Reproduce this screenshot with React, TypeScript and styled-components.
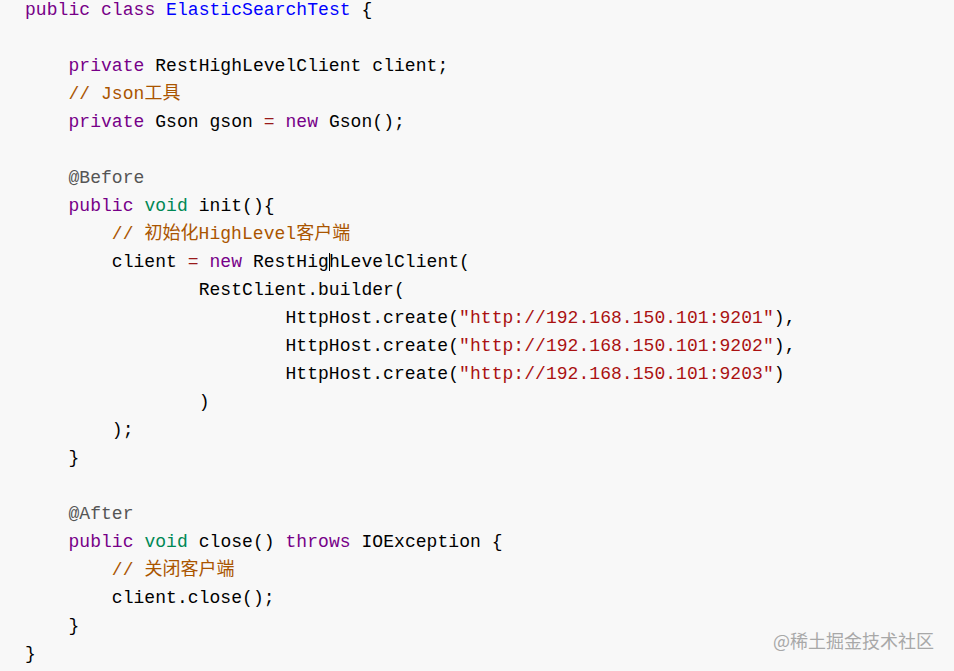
import React from "react";
import styled, { createGlobalStyle } from "styled-components";

const Global = createGlobalStyle`
  html, body { margin: 0; padding: 0; background: #f8f8f8; }
  #root { min-height: 100vh; }
`;

const Page = styled.div`
  position: relative;
  min-height: 671px;
  background: #f8f8f8;
  overflow: hidden;
`;

const Code = styled.pre`
  margin: -4px 0 0 0;
  padding: 0 0 0 25px;
  font-family: "Liberation Mono", "Noto Sans CJK SC", monospace;
  font-size: 18px;
  letter-spacing: 0.05px;
  color: #000;
`;

const Line = styled.div`
  height: 28px;
  line-height: 28px;
  white-space: pre;
`;

type Kind = "kw" | "def" | "type" | "str" | "op" | "cm" | "meta";
const colors: Record<Kind, string> = {
  kw: "#770088",
  def: "#0000ff",
  type: "#008855",
  str: "#aa1111",
  op: "#981a1a",
  cm: "#aa5500",
  meta: "#555555",
};

const T = styled.span<{ $k: Kind }>`
  color: ${(p) => colors[p.$k]};
`;

const Caret = styled.span`
  display: inline-block;
  width: 0;
  height: 18px;
  border-left: 1px solid #000;
  vertical-align: -4px;
  margin-right: -1px;
`;

const Watermark = styled.div`
  position: absolute;
  right: 20px;
  bottom: 20px;
  font-family: "Noto Sans CJK SC", sans-serif;
  font-size: 18px;
  line-height: 22px;
  color: #a8a8a8;
`;

export default function App() {
  return (
    <Page>
      <Global />
      <Code>
        <Line><T $k="kw">public</T> <T $k="kw">class</T> <T $k="def">ElasticSearchTest</T> {"{"}</Line>
        <Line> </Line>
        <Line>    <T $k="kw">private</T> RestHighLevelClient client;</Line>
        <Line>    <T $k="cm">// Json工具</T></Line>
        <Line>    <T $k="kw">private</T> Gson gson <T $k="op">=</T> <T $k="kw">new</T> Gson();</Line>
        <Line> </Line>
        <Line>    <T $k="meta">@Before</T></Line>
        <Line>    <T $k="kw">public</T> <T $k="type">void</T> init(){"{"}</Line>
        <Line>        <T $k="cm">// 初始化HighLevel客户端</T></Line>
        <Line>        client <T $k="op">=</T> <T $k="kw">new</T> RestHig<Caret />hLevelClient(</Line>
        <Line>                RestClient.builder(</Line>
        <Line>                        HttpHost.create(<T $k="str">"http://192.168.150.101:9201"</T>),</Line>
        <Line>                        HttpHost.create(<T $k="str">"http://192.168.150.101:9202"</T>),</Line>
        <Line>                        HttpHost.create(<T $k="str">"http://192.168.150.101:9203"</T>)</Line>
        <Line>                )</Line>
        <Line>        );</Line>
        <Line>    {"}"}</Line>
        <Line> </Line>
        <Line>    <T $k="meta">@After</T></Line>
        <Line>    <T $k="kw">public</T> <T $k="type">void</T> close() <T $k="kw">throws</T> IOException {"{"}</Line>
        <Line>        <T $k="cm">// 关闭客户端</T></Line>
        <Line>        client.close();</Line>
        <Line>    {"}"}</Line>
        <Line>{"}"}</Line>
      </Code>
      <Watermark>@稀土掘金技术社区</Watermark>
    </Page>
  );
}
